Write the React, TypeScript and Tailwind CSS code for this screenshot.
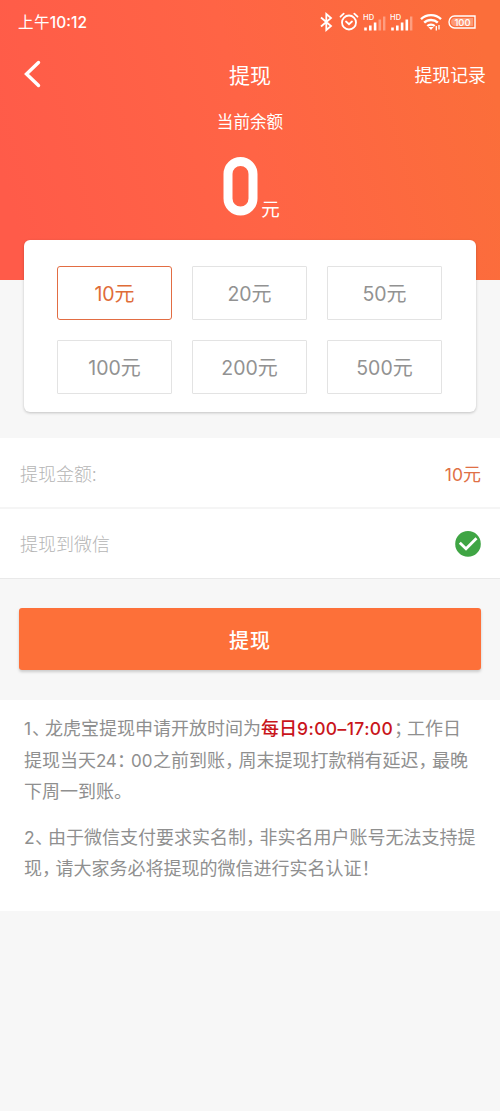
import type { ReactNode } from 'react';

const amounts = [10, 20, 50, 100, 200, 500];

function Digits({ children, className = '' }: { children: ReactNode; className?: string }) {
  return <span className={`inline-block whitespace-nowrap font-['Inter'] leading-[20px] ${className}`}>{children}</span>;
}

function Mark({ children, className = 'w-[13.5px]' }: { children: ReactNode; className?: string }) {
  return <span className={`inline-block whitespace-nowrap leading-[20px] [font-feature-settings:'halt'] ${className}`}>{children}</span>;
}

function Signal({ bars }: { bars: number }) {
  return (
    <svg width="24" height="20" viewBox="0 0 24 20" fill="#fff">
      <text x="0" y="7.5" fontSize="7.5" fontWeight="500" fontFamily="Inter" letterSpacing="0.2">HD</text>
      <rect x="1.2" y="15.5" width="2.6" height="3" />
      <rect x="6" y="13.5" width="2.6" height="5" />
      <rect x="10.8" y="10.5" width="2.6" height="8" />
      <rect x="15.5" y="7.5" width="2.6" height="11" opacity={bars > 3 ? 1 : 0.35} />
      <rect x="20" y="4.5" width="2.4" height="14" opacity="0.35" />
    </svg>
  );
}

function StatusBar() {
  return (
    <div className="flex h-[44px] items-center justify-between pl-[18px] pr-[24px]">
      <div className="flex items-baseline text-[15.5px] leading-[20px]">
        <span className="tracking-[0.4px]">上午</span>
        <Digits className="font-medium">10:12</Digits>
      </div>
      <div className="flex items-center">
        <svg className="mr-[6px]" width="13" height="20" viewBox="0 0 13 20" fill="none" stroke="#fff" strokeWidth="1.8">
          <path d="M1 5.5 11 14 6.3 18V2L11 6 1 14.5" />
        </svg>
        <svg className="mr-[4px]" width="20" height="20" viewBox="0 0 20 20" fill="none" stroke="#fff" strokeWidth="1.8" strokeLinecap="round">
          <circle cx="10" cy="10.5" r="7" />
          <path d="m7 9.5 3 2.7 3-2.7M1.5 4.7l3.2-3M18.5 4.7l-3.2-3" />
        </svg>
        <span className="mr-[3px]"><Signal bars={3} /></span>
        <span className="mr-[6px]"><Signal bars={4} /></span>
        <svg className="mr-[6px]" width="22" height="20" viewBox="0 0 22 20" fill="none" stroke="#fff" strokeWidth="2.4">
          <path d="M1 7.2C6.5 1.8 15.5 1.8 21 7.2M4.2 10.7C8 7 14 7 17.8 10.7M7.300 14C9.300 12.100 12.700 12.100 14.700 14" />
          <path d="m8.400 15 2.600 3 2.600-3Z" fill="#fff" stroke="none" />
          <path d="M16.300 14v4.500M19 13v4.500" strokeWidth="1.300" />
        </svg>
        <svg width="28" height="14" viewBox="0 0 28 14" fill="none">
          <path d="M6.500 1H27v12H6.500C3.500 13 1 10.500 1 7s2.500-6 5.500-6Z" stroke="#fff" strokeWidth="1.400" />
          <path d="M7 3h18v8H7C4.500 11 3 9.300 3 7s1.500-4 4-4Z" fill="#fff" opacity=".3" />
          <text x="14.500" y="10.500" textAnchor="middle" fill="#fff" fontSize="9.500" fontFamily="Inter" fontWeight="500">100</text>
        </svg>
      </div>
    </div>
  );
}

export default function App() {
  return (
    <div className="h-[1111px] w-[500px] overflow-hidden bg-[#f7f7f7] font-['Noto_Sans_CJK_SC',sans-serif] text-[#8f8f8f]">
      <header className="h-[280px] bg-[linear-gradient(75deg,#ff5b49_5%,#ff6445_50%,#fb6e3a_95%)] text-white">
        <StatusBar />
        <div className="grid h-[60px] grid-cols-[1fr_auto_1fr] items-center pl-[24px] pr-[14px]">
          <svg width="18" height="28" viewBox="0 0 18 28" fill="none" stroke="#fff" strokeWidth="3.4" strokeLinecap="round">
            <path d="M14.500 2.500 2.500 14l12 11.500" />
          </svg>
          <h1 className="-ml-[10px] -mt-[1px] text-[21px] font-normal leading-[30px]">提现</h1>
          <span className="justify-self-end text-[17.900px] leading-[30px]">提现记录</span>
        </div>
        <div className="flex flex-col items-center">
          <p className="mt-[5px] text-[16.600px] leading-[24px]">当前余额</p>
          <div className="ml-[3px] mt-[23px] flex h-[64px] items-start">
            <svg className="mr-[3px]" width="35" height="60" viewBox="0 0 35 60" fill="none" stroke="#fff" strokeWidth="9">
              <rect x="5" y="5.500" width="25" height="49.500" rx="12.500" />
            </svg>
            <span className="mt-[38px] text-[18.500px] leading-[28px]">元</span>
          </div>
        </div>
      </header>

      <section className="relative mx-[24px] mt-[-40px] grid h-[172px] grid-cols-[115px_115px_115px] content-start justify-center gap-x-[20px] gap-y-[20px] rounded-[6px] bg-white pr-[1px] pt-[26px] shadow-[0_1px_3px_rgba(0,0,0,0.22)]">
        {amounts.map((value, i) => (
          <button
            key={value}
            className={`flex h-[54px] items-baseline justify-center border pt-[12px] text-[20px] leading-[28px] ${i === 0 ? 'rounded-[3px] border-[#e26d43] text-[#df6c38]' : 'rounded-[1px] border-[#e3e3e3] text-[#929292]'}`}
          >
            <Digits className="text-[19.500px]">{value}</Digits>元
          </button>
        ))}
      </section>

      <section className="mt-[26px] bg-white">
        <div className="flex h-[71px] items-center justify-between border-b-2 border-[#f5f5f5] pl-[20px] pr-[19px] pt-[2px]">
          <span className="text-[18px] font-light text-[#b5b5b5]">提现金额:</span>
          <span className="text-[18px] text-[#df7045]"><Digits className="text-[17.500px]">10</Digits>元</span>
        </div>
        <div className="flex h-[70px] items-center justify-between border-b border-[#e9e9e9] pl-[20px] pr-[19px]">
          <span className="text-[18px] font-light text-[#b5b5b5]">提现到微信</span>
          <svg width="26" height="26" viewBox="0 0 26 26" fill="none">
            <circle cx="13" cy="12.900" r="12.800" fill="#3fa544" />
            <path d="m4.800 11.800 6.200 6L21.500 7.200" stroke="#fff" strokeWidth="2.800" />
          </svg>
        </div>
      </section>

      <button className="mx-[19px] mt-[29px] flex h-[62px] w-[462px] items-center justify-center rounded-[3px] bg-[#fd7039] pt-[2px] text-[20px] font-medium tracking-[1px] text-white shadow-[0_2px_3px_rgba(0,0,0,0.18)]">
        提现
      </button>

      <section className="mt-[30px] h-[211px] whitespace-nowrap bg-white pl-[24px] pt-[12px] text-[18px] leading-[31.500px]">
        <p>
          <Digits className="w-[8px] text-[17.500px]">1</Digits><Mark className="w-[13px]">、</Mark>龙虎宝提现申请开放时间为
          <strong className="font-medium text-[#c9151b]">每日<Digits className="w-[97px] text-[17.500px] font-medium tracking-[0.400px]">9:00–17:00</Digits></strong>
          <Mark className="w-[13px]">；</Mark>工作日
          <br />
          提现当天<Digits className="w-[21px] text-[17px] tracking-[-0.300px]">24</Digits><Mark className="w-[14px]">：</Mark>
          <Digits className="w-[22px] text-[17px]">00</Digits>之前到账<Mark>，</Mark>周末提现打款稍有延迟<Mark>，</Mark>最晚
          <br />
          下周一到账。
        </p>
        <p className="mt-[14px]">
          <Digits className="w-[11px] text-[17.500px]">2</Digits><Mark className="w-[13px]">、</Mark>由于微信支付要求实名制<Mark>，</Mark>非实名用户账号无法支持提
          <br />
          现<Mark>，</Mark>请大家务必将提现的微信进行实名认证<Mark>！</Mark>
        </p>
      </section>
    </div>
  );
}
